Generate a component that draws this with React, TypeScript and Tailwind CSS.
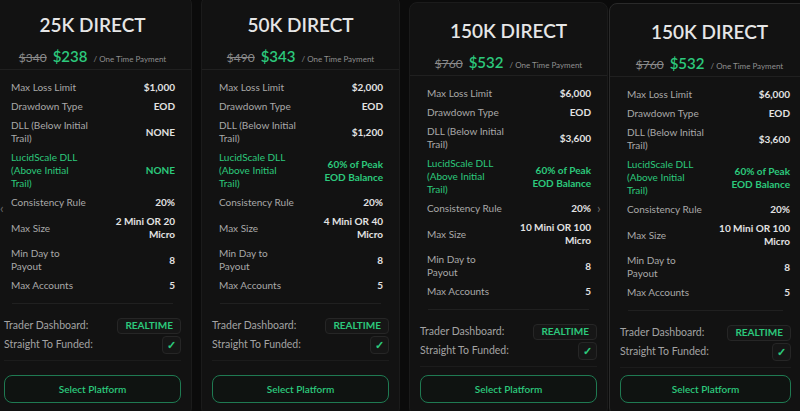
import React from "react";

type Card = {
  title: string;
  old: string;
  price: string;
  maxLoss: string;
  dll: string;
  lucid: string[];
  maxSize: string[];
};

const cards: Card[] = [
  { title: "25K DIRECT", old: "$340", price: "$238", maxLoss: "$1,000", dll: "NONE", lucid: ["NONE"], maxSize: ["2 Mini OR 20", "Micro"] },
  { title: "50K DIRECT", old: "$490", price: "$343", maxLoss: "$2,000", dll: "$1,200", lucid: ["60% of Peak", "EOD Balance"], maxSize: ["4 Mini OR 40", "Micro"] },
  { title: "150K DIRECT", old: "$760", price: "$532", maxLoss: "$6,000", dll: "$3,600", lucid: ["60% of Peak", "EOD Balance"], maxSize: ["10 Mini OR 100", "Micro"] },
  { title: "150K DIRECT", old: "$760", price: "$532", maxLoss: "$6,000", dll: "$3,600", lucid: ["60% of Peak", "EOD Balance"], maxSize: ["10 Mini OR 100", "Micro"] },
];

function Row({ label, value, green }: { label: string[]; value: string[]; green?: boolean }) {
  return (
    <div className="flex justify-between items-center py-[3px] text-[10px] leading-[13px]">
      <div className={green ? "text-[#2cc97c]" : "text-[#a9a9a9]"}>
        {label.map((l, i) => (
          <div key={i}>{l}</div>
        ))}
      </div>
      <div className={"text-right font-bold " + (green ? "text-[#2cc97c]" : "text-[#e2e2e2]")}>
        {value.map((v, i) => (
          <div key={i}>{v}</div>
        ))}
      </div>
    </div>
  );
}

function PlanCard({ c, extra, highlight }: { c: Card; extra: string; highlight?: boolean }) {
  return (
    <div
      className={
        "flex flex-col shrink-0 rounded-lg bg-[#121212] border " +
        (highlight ? "border-[#2a2a2a] w-[201px] " : "border-[#1b1b1b] w-[199px] ") +
        extra
      }
    >
      <div className="pt-[16px] text-center text-[19px] leading-[24px] font-semibold text-[#e6e6e6]">{c.title}</div>
      <div className="mt-[8px] h-[20px] flex items-baseline justify-center gap-[6px]">
        <span className="text-[12px] text-[#8a8a8a] line-through">{c.old}</span>
        <span className="text-[15px] font-semibold text-[#2cc97c]">{c.price}</span>
        <span className="text-[8px] text-[#8f8f8f]">/ One Time Payment</span>
      </div>
      <div className="mt-[4px] border-t border-[#202020]" />
      <div className={"pt-[8px] pb-[8px] pl-[17px] " + (highlight ? "pr-[19px]" : "pr-[16px]")}>
        <Row label={["Max Loss Limit"]} value={[c.maxLoss]} />
        <Row label={["Drawdown Type"]} value={["EOD"]} />
        <Row label={["DLL (Below Initial", "Trail)"]} value={[c.dll]} />
        <Row label={["LucidScale DLL", "(Above Initial", "Trail)"]} value={c.lucid} green />
        <Row label={["Consistency Rule"]} value={["20%"]} />
        <Row label={["Max Size"]} value={c.maxSize} />
        <Row label={["Min Day to", "Payout"]} value={["8"]} />
        <Row label={["Max Accounts"]} value={["5"]} />
      </div>
      <div className={"flex-1 flex flex-col pl-[10px] pb-[12px] " + (highlight ? "pr-[18px]" : "pr-[10px]")}>
        <div className="mx-[8px] border-t border-[#202020]" />
        <div className="pt-[13px] flex flex-col gap-[2px]">
          <div className="flex justify-between items-center h-[17px]">
            <span className="text-[10.5px] text-[#a3a3a3]">Trader Dashboard:</span>
            <span className="h-[16px] px-[7px] flex items-center rounded-[4px] border border-[#262626] bg-[#161616] text-[10px] font-bold text-[#2cc97c]">
              REALTIME
            </span>
          </div>
          <div className="flex justify-between items-center h-[18px]">
            <span className="text-[10.5px] text-[#a3a3a3]">Straight To Funded:</span>
            <span className="w-[19px] h-[18px] flex items-center justify-center rounded-[4px] border border-[#262626] bg-[#161616] text-[11px] font-bold text-[#2cc97c]">
              ✓
            </span>
          </div>
        </div>
        <div className="mt-[6px] border-t border-[#1c1c1c]" />
        <div className="flex-1" />
        <button className="h-[28px] w-full rounded-lg border-[1.5px] border-[#1f7a52] bg-[#0f1311] text-[10px] font-semibold text-[#2cc97c]">
          Select Platform
        </button>
      </div>
    </div>
  );
}

export default function App() {
  return (
    <div
      className="relative w-[800px] h-[411px] overflow-hidden bg-[#0b0b0b]"
      style={{ fontFamily: "Lato, 'Noto Sans', sans-serif" }}
    >
      <div className="flex items-stretch gap-[9px] -ml-[7px] -mt-[4px] h-[420px]">
        <PlanCard c={cards[0]} extra="" />
        <PlanCard c={cards[1]} extra="" />
        <PlanCard c={cards[2]} extra="mt-[6px]" />
        <PlanCard c={cards[3]} extra="mt-[7px] -ml-[8px]" highlight />
      </div>
      <div className="absolute left-[0px] top-[201px] text-[13px] leading-[14px] text-[#6b6b6b]">‹</div>
      <div className="absolute left-[597px] top-[201px] text-[13px] leading-[14px] text-[#6b6b6b]">›</div>
    </div>
  );
}
